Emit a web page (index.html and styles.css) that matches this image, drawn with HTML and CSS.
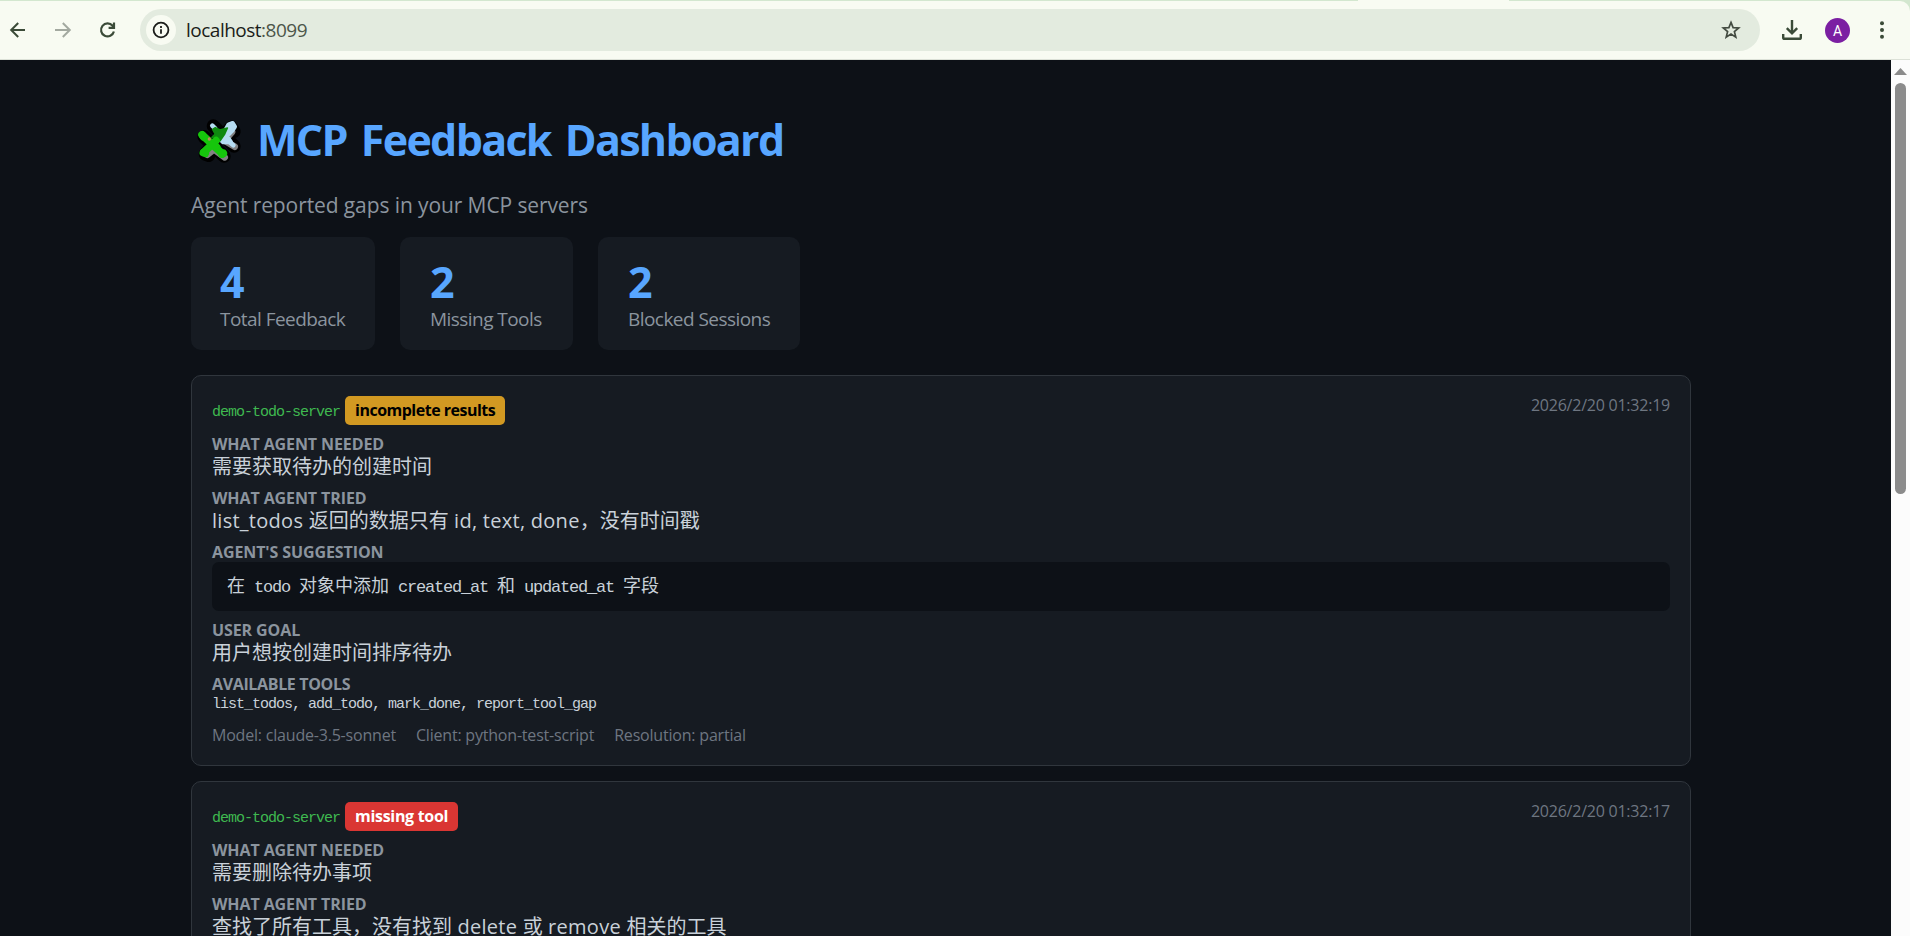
FILE: index.html
```html
<!DOCTYPE html>
<html lang="zh-CN">
<head>
    <meta charset="UTF-8">
    <meta name="viewport" content="width=device-width, initial-scale=1.0">
    <title>MCP Feedback Dashboard</title>
    <link rel="stylesheet" href="styles.css">
</head>
<body>

    <!-- Browser toolbar -->
    <div class="toolbar">
        <div class="toolbar-inner">
            <svg class="icon back" width="20" height="20" viewBox="0 0 20 20"><path d="M17 10H3.5M10.2 3 3.2 10l7 7"/></svg>
            <svg class="icon forward" width="20" height="20" viewBox="0 0 20 20"><path d="M2 10h14.5M9.8 3l7 7-7 7"/></svg>
            <svg class="icon reload" width="20" height="20" viewBox="0 0 20 20"><path d="M15.9 11.5A6.5 6.5 0 1 1 14.6 5.8L16 7.2M16 2.6v5.3h-5.4"/></svg>
            <div class="address-bar">
                <span class="site-info">
                    <svg class="icon" width="18" height="18" viewBox="0 0 18 18"><circle cx="9" cy="9" r="7.4"/><path d="M9 8.2v4.6M9 5.1v2"/></svg>
                </span>
                <span class="url">localhost<span class="port">:8099</span></span>
                <svg class="icon star" width="22" height="22" viewBox="0 0 22 22"><path d="m11 3.4 2.1 5.2 5.6.4-4.3 3.6 1.4 5.5-4.8-3-4.8 3 1.4-5.5L3.3 9l5.6-.4z"/></svg>
            </div>
            <svg class="icon download" width="22" height="22" viewBox="0 0 22 22"><path d="M11 1v13M5.8 9.2l5.2 5.2 5.2-5.2M2.2 15v3.4q0 1.4 1.4 1.4h14.8q1.4 0 1.4-1.4V15"/></svg>
            <span class="avatar">A</span>
            <svg class="menu" width="6" height="20" viewBox="0 0 6 20"><circle cx="3" cy="3.2" r="2"/><circle cx="3" cy="10" r="2"/><circle cx="3" cy="16.8" r="2"/></svg>
        </div>
    </div>

    <div class="viewport">
        <div class="page">
            <h1>
                <svg class="puzzle" width="60" height="60" viewBox="0 0 180 180">
                    <path class="puzzle-outline" d="M42 80 102 138M48 128 122 54M70 48 132 108M46 132 56 136M124 52 132 64"/>
                    <path class="puzzle-side" d="M52 134 72 118 104 142M104 92 134 110M126 66 112 82"/>
                    <path class="puzzle-blue" d="M67 47 76 56M122 50 96 84M104 84 130 106"/>
                    <path class="puzzle-blue" d="M116 44 128 40 134 50 126 62 110 78 122 96 100 96 92 88z"/>
                    <path class="puzzle-dark" d="M68 58 76 53 90 60 112 54 104 72 90 92 66 82 76 72z"/>
                    <path class="puzzle-green" d="M38 76 98 132M42 126 78 92M60 96 76 108"/>
                    <path class="puzzle-green" d="M36 74 40 80M40 128 46 130M66 104 80 112M96 132 100 130"/>
                    <circle class="puzzle-hole" cx="58" cy="87" r="5"/>
                </svg>
                <span>MCP Feedback Dashboard</span>
            </h1>
            <p class="subtitle">Agent reported gaps in your MCP servers</p>

            <!-- Stats -->
            <div class="stats">
                <div class="stat">
                    <div class="stat-value">4</div>
                    <div class="stat-label">Total Feedback</div>
                </div>
                <div class="stat">
                    <div class="stat-value">2</div>
                    <div class="stat-label">Missing Tools</div>
                </div>
                <div class="stat">
                    <div class="stat-value">2</div>
                    <div class="stat-label">Blocked Sessions</div>
                </div>
            </div>

            <!-- Feedback list -->
            <div class="card">
                <div class="card-header">
                    <div class="card-title">
                        <span class="server">demo-todo-server</span>
                        <span class="badge incomplete">incomplete results</span>
                    </div>
                    <span class="time">2026/2/20 01:32:19</span>
                </div>
                <div class="field">
                    <div class="label">WHAT AGENT NEEDED</div>
                    <div class="content"><span class="zh">需要获取待办的创建时间</span></div>
                </div>
                <div class="field">
                    <div class="label">WHAT AGENT TRIED</div>
                    <div class="content">list_todos <span class="zh">返回的数据只有</span> id, text, done<span class="zh">，没有时间戳</span></div>
                </div>
                <div class="field">
                    <div class="label">AGENT'S SUGGESTION</div>
                    <div class="suggestion"><span class="zh">在</span> todo <span class="zh">对象中添加</span> created_at <span class="zh">和</span> updated_at <span class="zh">字段</span></div>
                </div>
                <div class="field">
                    <div class="label">USER GOAL</div>
                    <div class="content"><span class="zh">用户想按创建时间排序待办</span></div>
                </div>
                <div class="field">
                    <div class="label tight">AVAILABLE TOOLS</div>
                    <div class="tools">list_todos, add_todo, mark_done, report_tool_gap</div>
                </div>
                <div class="meta">
                    <span>Model: claude-3.5-sonnet</span>
                    <span>Client: python-test-script</span>
                    <span>Resolution: partial</span>
                </div>
            </div>

            <div class="card">
                <div class="card-header">
                    <div class="card-title">
                        <span class="server">demo-todo-server</span>
                        <span class="badge missing">missing tool</span>
                    </div>
                    <span class="time">2026/2/20 01:32:17</span>
                </div>
                <div class="field">
                    <div class="label">WHAT AGENT NEEDED</div>
                    <div class="content"><span class="zh">需要删除待办事项</span></div>
                </div>
                <div class="field">
                    <div class="label">WHAT AGENT TRIED</div>
                    <div class="content"><span class="zh">查找了所有工具，没有找到</span> delete <span class="zh">或</span> remove <span class="zh">相关的工具</span></div>
                </div>
            </div>
        </div>

        <!-- Scrollbar -->
        <div class="scrollbar">
            <div class="scroll-arrow"></div>
            <div class="scroll-thumb"></div>
        </div>
    </div>

</body>
</html>
```
FILE: styles.css
```css
/* General Reset */
* {
    margin: 0;
    padding: 0;
    box-sizing: border-box;
}

body {
    font-family: "Open Sans", "Noto Sans CJK SC", sans-serif;
    height: 936px;
    overflow: hidden;
    background-color: #0d1117;
    color: #c9d1d9;
    font-size: 20px;
}

/* Browser toolbar */
.toolbar {
    height: 60px;
    padding-top: 1px;
    background: linear-gradient(90deg, #d3e7cf 1358px, #f8fbf2 1358px, #f8fbf2 1509px, #d3e7cf 1509px);
}

.toolbar-inner {
    display: flex;
    align-items: center;
    height: 59px;
    padding: 0 25px 0 8px;
    background-color: #f8fbf2;
    border-bottom: 1px solid #dce1d7;
    border-top-right-radius: 10px;
}

.icon {
    flex: none;
    fill: none;
    stroke: #3b4b38;
    stroke-width: 2;
}

.forward {
    margin-left: 25px;
    stroke: #a3a9a0;
}

.reload {
    margin-left: 25px;
    stroke-width: 2.2;
}

.address-bar {
    display: flex;
    align-items: center;
    width: 1620px;
    height: 42px;
    margin-left: 22px;
    padding: 0 18px 0 6px;
    background-color: #e3ebdf;
    border-radius: 21px;
}

.site-info {
    display: flex;
    align-items: center;
    justify-content: center;
    width: 30px;
    height: 30px;
    background-color: #f8fbf2;
    border-radius: 50%;
}

.site-info .icon {
    stroke: #1b1d1a;
    stroke-width: 1.8;
}

.url {
    margin-left: 10px;
    color: #1a1c18;
    font-size: 19px;
    letter-spacing: -0.5px;
}

.port {
    color: #4c5549;
}

.star {
    margin-left: auto;
    stroke: #434b41;
    stroke-width: 1.7;
}

.download {
    margin-left: 21px;
    stroke-width: 2.4;
}

.avatar {
    width: 25px;
    height: 25px;
    margin-left: 22px;
    border-radius: 50%;
    background-color: #7b1fa2;
    color: #fff;
    font-family: Roboto, sans-serif;
    font-size: 14px;
    line-height: 26px;
    text-align: center;
}

.menu {
    margin-left: 29px;
    fill: #3b4b38;
}

/* Page area */
.viewport {
    display: flex;
    justify-content: space-between;
    height: 876px;
    overflow: hidden;
}

.page {
    flex: none;
    width: 1500px;
    margin-left: 191px;
    padding-top: 45px;
}

h1 {
    display: flex;
    align-items: center;
    height: 68px;
    color: #58a6ff;
    font-size: 43px;
    font-weight: 700;
    letter-spacing: -1.7px;
    word-spacing: 4.5px;
    white-space: nowrap;
}

.puzzle {
    margin: 1px 7px 0 -1px;
}

.puzzle path {
    stroke-linejoin: round;
    stroke-linecap: round;
}

.puzzle-outline {
    fill: none;
    stroke: #000;
    stroke-width: 40;
}

.puzzle-side {
    fill: none;
    stroke: #828282;
    stroke-width: 20;
}

.puzzle-blue {
    fill: #b5dcf1;
    stroke: #b5dcf1;
    stroke-width: 14;
}

.puzzle-dark {
    fill: #0f8a10;
    stroke: #0f8a10;
    stroke-width: 5;
}

.puzzle-green {
    fill: none;
    stroke: #16c60c;
    stroke-width: 23;
}

.puzzle-hole {
    fill: #b58c5c;
}

.subtitle {
    margin-top: 17px;
    color: #8b949e;
    font-size: 21px;
    line-height: 30px;
    letter-spacing: -0.1px;
}

/* Stats */
.stats {
    display: grid;
    grid-template-columns: 184px 173px 202px;
    gap: 25px;
    margin-top: 17px;
}

.stat {
    height: 113px;
    padding: 20px 29px;
    background-color: #161b22;
    border-radius: 10px;
    white-space: nowrap;
}

.stat + .stat {
    padding-left: 30px;
}

.stat-value {
    color: #58a6ff;
    font-size: 43px;
    font-weight: 700;
    line-height: 50px;
}

.stat-label {
    color: #8b949e;
    font-size: 19px;
    line-height: 25px;
    letter-spacing: -0.55px;
}

/* Feedback card */
.card {
    height: 391px;
    margin-top: 15px;
    padding: 20px;
    background-color: #161b22;
    border: 1px solid #30363d;
    border-radius: 10px;
}

.stats + .card {
    margin-top: 25px;
}

.card-header {
    display: flex;
    justify-content: space-between;
    height: 29px;
    margin-bottom: 10px;
}

.card-title {
    display: flex;
    align-items: center;
    gap: 5px;
}

.server {
    width: 128px;
    padding-top: 4px;
    color: #3fb950;
    font-family: "Liberation Mono", monospace;
    font-size: 15px;
    letter-spacing: -1px;
    white-space: nowrap;
}

.badge {
    height: 29px;
    padding: 0 10px;
    border-radius: 5px;
    font-size: 16px;
    font-weight: 700;
    line-height: 29px;
    letter-spacing: -0.5px;
}

.incomplete {
    background-color: #d29922;
    color: #000;
}

.missing {
    background-color: #da3633;
    color: #fff;
    letter-spacing: -0.3px;
}

.time {
    color: #6e7681;
    font-size: 16px;
    line-height: 18px;
    letter-spacing: -0.23px;
}

.field {
    margin-bottom: 10px;
}

.label {
    color: #8b949e;
    font-size: 16px;
    font-weight: 700;
    line-height: 19px;
    letter-spacing: -0.1px;
}

.tight {
    letter-spacing: -0.35px;
}

.content {
    height: 25px;
    line-height: 25px;
    letter-spacing: 0.27px;
    white-space: nowrap;
}

.content .zh {
    letter-spacing: 0;
}

.suggestion {
    height: 49px;
    margin-bottom: 9px;
    padding: 2px 15px 0;
    background-color: #0d1117;
    border-radius: 7px;
    font-family: "Liberation Mono", "Noto Sans CJK SC", monospace;
    font-size: 17px;
    line-height: 47px;
    letter-spacing: -1.2px;
}

.suggestion .zh {
    font-size: 18px;
    letter-spacing: 0;
}

.tools {
    height: 21px;
    font-family: "Liberation Mono", monospace;
    font-size: 15px;
    line-height: 21px;
    letter-spacing: -1px;
}

.meta {
    display: flex;
    gap: 20px;
    margin-top: 10px;
    color: #6e7681;
    font-size: 16px;
    line-height: 20px;
    letter-spacing: -0.2px;
}

/* Scrollbar */
.scrollbar {
    width: 19px;
    padding-top: 8px;
    background-color: #fcfcfc;
}

.scroll-arrow {
    width: 13px;
    height: 7px;
    margin-left: 3px;
    background-color: #8b8b8b;
    clip-path: polygon(50% 0, 100% 100%, 0 100%);
}

.scroll-thumb {
    width: 11px;
    height: 411px;
    margin: 8px 0 0 4px;
    background-color: #8b8b8b;
    border-radius: 6px;
}
```
